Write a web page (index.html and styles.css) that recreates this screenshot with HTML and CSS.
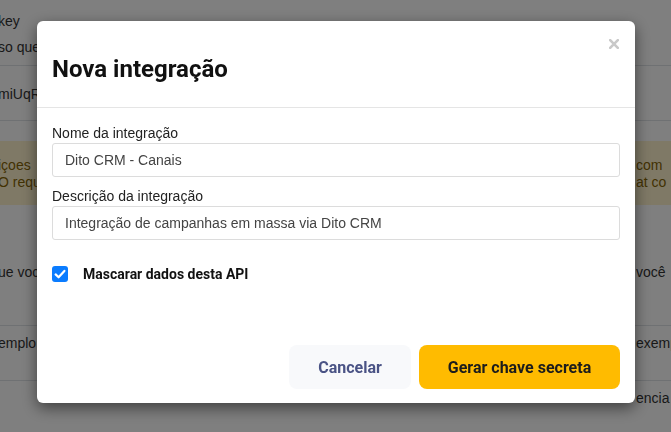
FILE: index.html
```html
<!DOCTYPE html>
<html lang="pt-BR">
<head>
<meta charset="utf-8">
<title>Nova integração</title>
<link rel="stylesheet" href="styles.css">
</head>
<body>
<div class="page">
  <div class="block head">
    <div class="line"><span class="l">key</span><span class="r"></span></div>
    <div class="line"><span class="l">so que</span><span class="r"></span></div>
  </div>
  <div class="block row2">
    <div class="line"><span class="l">miUqR</span><span class="r"></span></div>
  </div>
  <div class="alert">
    <div class="line"><span class="l">içoes</span><span class="r">com</span></div>
    <div class="line"><span class="l">O requ</span><span class="r">at co</span></div>
  </div>
  <div class="block row4">
    <div class="line"><span class="l">ue voc</span><span class="r">você</span></div>
  </div>
  <div class="block row5">
    <div class="line"><span class="l">emplo</span><span class="r">exemp</span></div>
  </div>
  <div class="block row6">
    <div class="line"><span class="l"></span><span class="r">encia</span></div>
  </div>
</div>

<div class="overlay"></div>

<div class="modal" role="dialog">
  <button class="close" aria-label="Fechar">
    <svg width="10" height="10" viewBox="0 0 10 10"><path d="M1.2 1.2 L8.8 8.8 M8.8 1.2 L1.2 8.8" stroke="#c9c9c9" stroke-width="2.6" stroke-linecap="square" fill="none"/></svg>
  </button>
  <div class="modal-header">
    <h2 class="title">Nova integração</h2>
  </div>
  <div class="modal-body">
    <label class="label">Nome da integração</label>
    <div class="input first">Dito CRM - Canais</div>
    <label class="label">Descrição da integração</label>
    <div class="input">Integração de campanhas em massa via Dito CRM</div>
    <div class="check-row">
      <span class="checkbox">
        <svg width="16" height="16" viewBox="0 0 16 16"><path d="M3.6 8.4 L6.6 11.3 L12.4 4.9" stroke="#fff" stroke-width="2.2" fill="none" stroke-linecap="round" stroke-linejoin="round"/></svg>
      </span>
      <span class="check-label">Mascarar dados desta API</span>
    </div>
  </div>
  <div class="modal-footer">
    <button class="btn btn-cancel">Cancelar</button>
    <button class="btn btn-primary">Gerar chave secreta</button>
  </div>
</div>
</body>
</html>
```

FILE: styles.css
```css
html, body {
  margin: 0;
  padding: 0;
  overflow: hidden;
  width: 671px;
  height: 432px;
  background: #fff;
}

.page {
  margin-left: -2px;
  width: 673px;
  font-family: "Liberation Sans", Arial, sans-serif;
  font-size: 14px;
  color: #333;
}

.line {
  display: grid;
  grid-template-columns: 1fr 35px;
  line-height: 17px;
  white-space: nowrap;
}
.line .l, .line .r { overflow: hidden; }

.block { border-bottom: 1px solid #dee2e6; }

.head { padding: 8px 0 5px; height: 52px; }
.head .line { line-height: 26px; }

.row2 { padding: 20px 0 17px; }

.alert {
  margin-top: 20px;
  padding: 16px 0 14px;
  background: #fff3cd;
  color: #856404;
}

.row4 { padding: 59px 0 44px; }
.row5 { padding: 9px 0 28px; }
.row6 { padding: 9px 0 20px; border-bottom: none; }

.overlay {
  position: fixed;
  inset: 0;
  background: rgba(0, 0, 0, 0.5);
}

.modal {
  position: fixed;
  left: 37px;
  top: 21px;
  width: 598px;
  background: #fff;
  border-radius: 6px;
  box-shadow: 0 5px 15px rgba(0, 0, 0, 0.5);
  font-family: "Liberation Sans", Arial, sans-serif;
}

.close {
  position: absolute;
  top: 18px;
  right: 16px;
  width: 10px;
  height: 10px;
  padding: 0;
  border: 0;
  background: transparent;
  display: block;
}
.close svg { display: block; }

.modal-header {
  padding: 34px 15px 24px;
  border-bottom: 1px solid #e5e5e5;
}
.title {
  margin: 0;
  font-family: Roboto, "Liberation Sans", sans-serif;
  font-weight: 700;
  font-size: 24px;
  line-height: 28px;
  color: #111;
}

.modal-body {
  padding: 17px 15px 0;
  display: flex;
  flex-direction: column;
}
.label {
  font-size: 14px;
  line-height: 16px;
  color: #222;
  margin-bottom: 2px;
}
.input {
  box-sizing: border-box;
  height: 34px;
  border: 1px solid #dcdcdc;
  border-radius: 3px;
  padding: 0 12px;
  display: flex;
  align-items: center;
  font-size: 14px;
  color: #444;
}
.input.first { margin-bottom: 11px; }

.check-row {
  display: flex;
  align-items: center;
  gap: 15px;
  margin-top: 26px;
}
.checkbox {
  width: 16px;
  height: 16px;
  border-radius: 3px;
  background: #0a7cff;
  display: block;
}
.checkbox svg { display: block; }
.check-label {
  font-family: Roboto, "Liberation Sans", sans-serif;
  font-weight: 700;
  font-size: 14px;
  line-height: 16px;
  color: #111;
}

.modal-footer {
  display: flex;
  justify-content: flex-end;
  gap: 8px;
  padding: 63px 15px 14px;
}
.btn {
  height: 44px;
  border: 0;
  border-radius: 8px;
  font-family: Roboto, "Liberation Sans", sans-serif;
  font-weight: 700;
  font-size: 16px;
  padding: 0;
}
.btn-cancel {
  width: 122px;
  background: #f8f9fb;
  color: #4a5385;
}
.btn-primary {
  width: 201px;
  background: #ffbb00;
  color: #1c1c1c;
}
```
